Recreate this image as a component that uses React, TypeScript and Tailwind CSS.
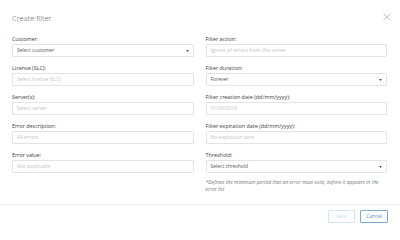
import React from 'react';

// ─── Field bits ───────────────────────────────────────────────────────────────

function Caret() {
  return (
    <svg width="3" height="2" viewBox="0 0 3 2" className="flex-shrink-0">
      <path d="M0 0 L3 0 L1.5 2 Z" fill="#555" />
    </svg>
  );
}

function Field({
  label,
  value,
  placeholder = true,
  select = false,
}: {
  label: string;
  value: string;
  placeholder?: boolean;
  select?: boolean;
}) {
  return (
    <div className="flex flex-col">
      <label className="text-[5.4px] leading-[7px] text-[#3a3a3a] mb-[1.5px]">{label}</label>
      <div className="h-[13px] border border-[#e3e3e3] rounded-[1px] flex items-center justify-between pl-[4px] pr-[4px] bg-white">
        <span className={`text-[5px] leading-[7px] ${placeholder ? 'text-[#c4c4c4]' : 'text-[#555]'}`}>
          {value}
        </span>
        {select && <Caret />}
      </div>
    </div>
  );
}

// ─── Page ─────────────────────────────────────────────────────────────────────

export default function App() {
  return (
    <div className="w-[400px] h-[228px] bg-white overflow-hidden flex flex-col font-['Open_Sans',_'Liberation_Sans',_sans-serif]">
      {/* header */}
      <div className="flex items-center justify-between pl-[12px] pr-[9px] pt-[13px]">
        <h1 className="text-[7.5px] leading-[10px] font-light text-[#555]">Create filter</h1>
        <button className="w-[8px] h-[8px] -mt-[2px]">
          <svg viewBox="0 0 8 8" width="8" height="8">
            <path d="M0.5 0.5 L7.5 7.5 M7.5 0.5 L0.5 7.5" stroke="#9a9a9a" strokeWidth="0.6" />
          </svg>
        </button>
      </div>

      {/* body */}
      <div className="grid grid-cols-2 gap-x-[12px] pl-[12px] pr-[13px] pt-[12.5px]">
        <div className="flex flex-col gap-y-[7.5px]">
          <Field label="Customer:" value="Select customer" placeholder={false} select />
          <Field label="License (SLC):" value="Select license (SLC)" />
          <Field label="Server(s):" value="Select server" />
          <Field label="Error description:" value="All errors" />
          <Field label="Error value:" value="Not applicable" />
        </div>
        <div className="flex flex-col gap-y-[7.5px]">
          <Field label="Filter action:" value="Ignore all errors from this server" />
          <Field label="Filter duration:" value="Forever" placeholder={false} select />
          <Field label="Filter creation date (dd/mm/yyyy):" value="01/06/2016" />
          <Field label="Filter expiration date (dd/mm/yyyy):" value="No expiration date" />
          <div>
            <Field label="Threshold:" value="Select threshold" placeholder={false} select />
            <p className="mt-[6px] text-[5px] leading-[7px] italic text-[#777]">
              *Defines the minimum period that an error must exist, before it appears in the error list
            </p>
          </div>
        </div>
      </div>

      {/* footer */}
      <div className="mt-auto border-t border-[#eeeeee] flex justify-end gap-[5px] pr-[12px] pt-[5px] pb-[5px]">
        <button
          disabled
          className="w-[27px] h-[13px] border border-[#d3e5f3] text-[5px] text-[#c5dcec] rounded-[1px] bg-white"
        >
          Save
        </button>
        <button className="w-[28px] h-[13px] border border-[#79acd8] text-[5px] text-[#4f8fc4] rounded-[1px] bg-white">
          Cancel
        </button>
      </div>
    </div>
  );
}
